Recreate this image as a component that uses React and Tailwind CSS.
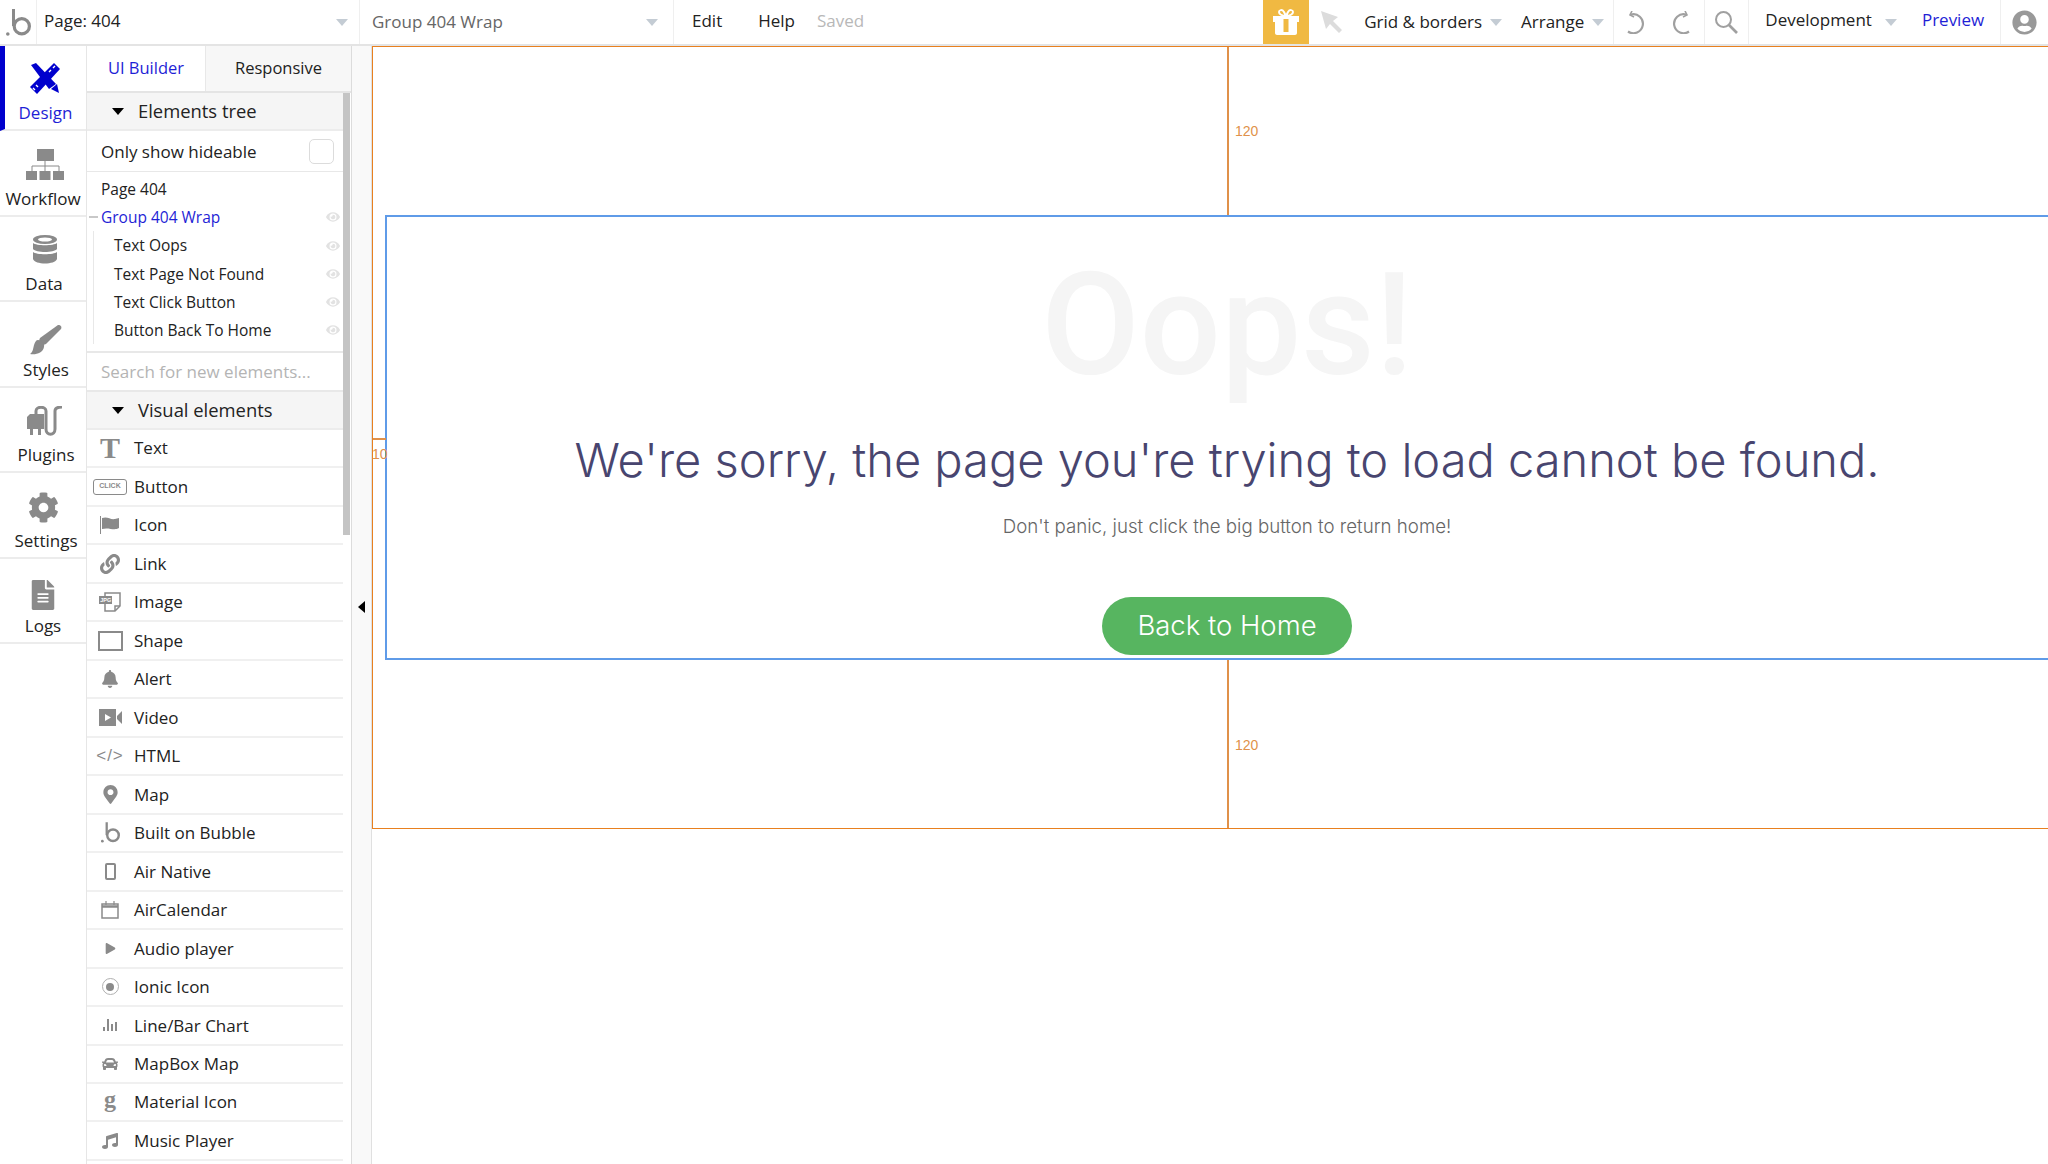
import { FaBell, FaCar, FaMapMarkerAlt, FaMusic, FaPlay, FaCog, FaFileAlt, FaUserCircle, FaEye, FaLink } from "react-icons/fa";

const gray = "#8a8a8a";

const BubbleLogo = ({ className }) => (
  <svg viewBox="0 0 25 27" className={className} fill="none">
    <circle cx="1.8" cy="25" r="1.8" fill={gray} />
    <path d="M7.5 0v17" stroke={gray} strokeWidth="3" />
    <circle cx="15.8" cy="17.2" r="7.6" stroke={gray} strokeWidth="3.2" />
  </svg>
);

const Caret = ({ className = "" }) => (
  <span className={`inline-block h-0 w-0 border-x-[6px] border-t-[7px] border-x-transparent border-t-[#c4ccd4] ${className}`} />
);

const DesignIcon = () => (
  <svg viewBox="0 0 32 31" className="h-[31px] w-[32px] -translate-x-[2px]" fill="#0000cd">
    <path d="M26 0l6 6L9 31l-7-7z" />
    <path d="M3 2l5-2 20 21-7 5z" />
    <path d="M23 26l6-5 2 9z" />
    <path d="M25 5l2-2M21 9l2-2M8 22l2 2M5 25l2 2" stroke="#fff" strokeWidth="1.4" />
  </svg>
);

const WorkflowIcon = () => (
  <svg viewBox="0 0 38 31" className="h-[31px] w-[38px]" fill={gray}>
    <rect x="11" y="0" width="17" height="12" />
    <rect x="0" y="22" width="11" height="9" />
    <rect x="13.5" y="22" width="11" height="9" />
    <rect x="27" y="22" width="11" height="9" />
    <path d="M19 12v10M6 22v-5h27v5" stroke={gray} fill="none" />
  </svg>
);

const DataIcon = () => (
  <svg viewBox="0 0 24 29" className="h-[29px] w-[24px]" fill={gray}>
    <ellipse cx="12" cy="4.5" rx="12" ry="4.5" />
    <ellipse cx="12" cy="4.5" rx="7" ry="2" fill="#fff" />
    <path d="M0 8c3 3 21 3 24 0v6c-3 4-21 4-24 0z" />
    <path d="M0 17c3 3 21 3 24 0v7c-2 6-22 6-24 0z" />
  </svg>
);

const BrushIcon = () => (
  <svg viewBox="0 0 32 30" className="h-[30px] w-[32px]" fill={gray}>
    <path d="M28 0c3 0 4 2 3 4L16 19c-2 1-4 1-6-1-1-2-1-3 0-5z" />
    <path d="M8 15c4 0 7 3 6 7-1 6-8 8-14 7 3-2 3-5 4-9 1-3 2-5 4-5z" />
  </svg>
);

const PluginsIcon = () => (
  <svg viewBox="0 0 35 30" className="h-[30px] w-[35px]" fill={gray}>
    <path d="M3 8h14v15H0V11z" />
    <path d="M3 23h3v6H3zM11 23h3v6h-3z" />
    <path d="M9 8V5c0-5 10-5 10 0v18c0 7 9 7 9 0V5c0-3 2-4 7-4" stroke={gray} strokeWidth="3" fill="none" />
  </svg>
);

const GiftIcon = () => (
  <svg viewBox="0 0 26 26" className="h-[26px] w-[26px]">
    <path d="M13 7C9 7 6 5 6 3s3-3 5 0l2 4 2-4c2-3 5-2 5 0s-3 4-7 4z" fill="none" stroke="#fff" strokeWidth="2" />
    <path d="M0 7h26v6H24v11c0 1-1 2-2 2H4c-1 0-2-1-2-2V13H0z" fill="#fff" />
    <rect x="10.5" y="10" width="5" height="13" fill="#f0b942" />
  </svg>
);

const PointerIcon = () => (
  <svg viewBox="0 0 22 22" className="h-[22px] w-[22px]" fill="#dcdcdc">
    <path d="M0 0l17 6-5 4 9 9-3 3-9-9-4 5z" />
  </svg>
);

const UndoIcon = ({ className = "" }) => (
  <svg viewBox="0 0 20 23" className={`h-[23px] w-[20px] ${className}`} fill="none" stroke="#a0a0a0" strokeWidth="2.2">
    <path d="M5 3.5a9.5 9.5 0 1 1-3 17" />
    <path d="M6 0L4 4l4 2" strokeWidth="1.6" />
  </svg>
);

const SearchIcon = () => (
  <svg viewBox="0 0 23 23" className="h-[23px] w-[23px]" fill="none" stroke="#a0a0a0">
    <circle cx="8.5" cy="8.5" r="7.5" strokeWidth="2" />
    <path d="M14 14l8 8" strokeWidth="2.6" />
  </svg>
);

const navItems = [
  { label: "Workflow", icon: <WorkflowIcon />, iconClass: "translate-x-[2px] -translate-y-[1px]", labelClass: "" },
  { label: "Data", icon: <DataIcon />, iconClass: "translate-x-[2px] -translate-y-[2px]", labelClass: "pl-[2px]" },
  { label: "Styles", icon: <BrushIcon />, iconClass: "translate-x-[3px] translate-y-[3px]", labelClass: "pl-[6px]" },
  { label: "Plugins", icon: <PluginsIcon />, iconClass: "translate-x-[1px] -translate-y-[1px]", labelClass: "pl-[6px]" },
  { label: "Settings", icon: <FaCog size={31} color={gray} />, iconClass: "", labelClass: "pl-[6px]" },
  { label: "Logs", icon: <FaFileAlt size={30} color={gray} />, iconClass: "translate-y-[2px]", labelClass: "" },
];

const treeItems = ["Text Oops", "Text Page Not Found", "Text Click Button", "Button Back To Home"];

const visualElements = [
  { label: "Text", icon: <span className="font-['Liberation_Serif'] text-[30px] font-bold leading-none text-[#8a8a8a]">T</span> },
  {
    label: "Button",
    icon: (
      <span className="flex h-[16px] w-[34px] items-center justify-center rounded-[3px] border border-[#8a8a8a] font-['Liberation_Sans'] text-[7px] font-bold text-[#8a8a8a]">
        CLICK
      </span>
    ),
  },
  {
    label: "Icon",
    icon: (
      <svg viewBox="0 0 20 18" className="h-[18px] w-[20px]" fill={gray}>
        <path d="M0 0h1v18H0z" />
        <path d="M2 2c6-2 8 2 13 1 1 0 3-1 4-1v10c-5 3-10-1-17 1z" />
      </svg>
    ),
  },
  { label: "Link", icon: <FaLink size={20} color={gray} /> },
  {
    label: "Image",
    icon: (
      <svg viewBox="0 0 22 20" className="h-[20px] w-[22px]" fill="none">
        <path d="M6 1h15v13l-5 5H6z" stroke={gray} strokeWidth="1.5" />
        <path d="M16 19v-5h5" stroke={gray} strokeWidth="1.5" />
        <rect x="0" y="4" width="13" height="8" fill={gray} />
        <text x="1.2" y="10" fontSize="5.5" fontWeight="700" fill="#fff" fontFamily="Liberation Sans">JPG</text>
      </svg>
    ),
  },
  { label: "Shape", icon: <span className="block h-[20px] w-[25px] border-2 border-[#8a8a8a]" /> },
  { label: "Alert", icon: <FaBell size={18} color={gray} /> },
  {
    label: "Video",
    icon: (
      <svg viewBox="0 0 23 17" className="h-[17px] w-[23px]" fill={gray}>
        <rect x="0" y="0" width="17" height="17" />
        <path d="M6 5l6 3.5L6 12z" fill="#fff" />
        <path d="M18 7l5-5v13l-5-5z" />
      </svg>
    ),
  },
  { label: "HTML", icon: <span className="font-['Liberation_Sans'] text-[17px] leading-none tracking-[1px] text-[#8a8a8a]">{"</>"}</span> },
  { label: "Map", icon: <FaMapMarkerAlt size={19} color={gray} /> },
  { label: "Built on Bubble", icon: <BubbleLogo className="h-[21px] w-[19px]" /> },
  { label: "Air Native", icon: <span className="block h-[17px] w-[11px] rounded-[2px] border-2 border-[#8a8a8a]" /> },
  {
    label: "AirCalendar",
    icon: (
      <svg viewBox="0 0 18 18" className="h-[18px] w-[18px]" fill="none" stroke={gray}>
        <rect x="1" y="3" width="16" height="14" strokeWidth="1.5" />
        <path d="M1 5.5h16" strokeWidth="2.5" />
        <path d="M5 0v4M13 0v4" strokeWidth="1.2" />
      </svg>
    ),
  },
  { label: "Audio player", icon: <FaPlay size={11} color={gray} /> },
  {
    label: "Ionic Icon",
    icon: (
      <span className="flex h-[17px] w-[17px] items-center justify-center rounded-full border border-[#b0b0b0]">
        <span className="block h-[8px] w-[8px] rounded-full bg-[#8a8a8a]" />
      </span>
    ),
  },
  {
    label: "Line/Bar Chart",
    icon: (
      <svg viewBox="0 0 14 12" className="h-[12px] w-[14px]" fill={gray}>
        <path d="M0 8h2v4H0zM4 0h2v12H4zM8 5h2v7H8zM12 3h2v9h-2z" />
      </svg>
    ),
  },
  { label: "MapBox Map", icon: <FaCar size={16} color={gray} /> },
  { label: "Material Icon", icon: <span className="-translate-y-[3px] font-['Liberation_Serif'] text-[24px] font-bold leading-none text-[#8a8a8a]">g</span> },
  { label: "Music Player", icon: <FaMusic size={16} color={gray} /> },
];

const Sidebar = () => (
  <div className="flex h-full w-[87px] shrink-0 flex-col border-r border-[#e6e6e6] bg-white">
    <div className="flex h-[85px] flex-col items-center border-b-2 border-l-[5px] border-[#ececec] border-l-[#0000cd] pt-[17px]">
      <DesignIcon />
      <span className="mt-[7px] text-[17px] leading-[24px] text-[#1f1fd6]">Design</span>
    </div>
    {navItems.map((item) => (
      <div key={item.label} className="flex h-[85.5px] flex-col items-center justify-end border-b-2 border-[#ececec] pb-[4px]">
        <div className={`flex h-[34px] items-center justify-center ${item.iconClass}`}>{item.icon}</div>
        <span className={`mt-[4px] text-[17px] leading-[24px] text-[#222] ${item.labelClass}`}>{item.label}</span>
      </div>
    ))}
  </div>
);

const SectionHeader = ({ title }) => (
  <div className="flex h-[38px] items-center border-b-2 border-[#ececec] bg-[#f5f5f5] pl-[25px]">
    <span className="h-0 w-0 border-x-[6px] border-t-[7px] border-x-transparent border-t-black" />
    <span className="ml-[14px] text-[18.4px] text-[#222]">{title}</span>
  </div>
);

const EyeDim = () => <FaEye size={14} color="#e2e2e2" />;

const Panel = () => (
  <div className="flex h-full w-[265px] shrink-0 flex-col border-r border-[#dcdcdc] bg-white">
    <div className="flex h-[47px] border-b-2 border-[#e4e4e4] text-[16.5px]">
      <div className="flex w-[118px] items-center justify-center text-[#1f1fd6]">UI Builder</div>
      <div className="flex flex-1 items-center justify-center border-l border-[#e8e8e8] bg-[#f7f7f7] text-[#222]">Responsive</div>
    </div>
    <div className="flex min-h-0 flex-1">
      <div className="min-w-0 flex-1 overflow-hidden">
        <SectionHeader title="Elements tree" />
        <div className="flex h-[41px] items-center justify-between border-b border-[#e8e8e8] pl-[14px] pr-[9px] pt-[1px] text-[17px] text-[#222]">
          <span>Only show hideable</span>
          <span className="h-[25px] w-[25px] rounded-[5px] border border-[#dcdcdc]" />
        </div>
        <div className="h-[181px] border-b-2 border-[#e8e8e8] pt-[3px] text-[15.5px] leading-[28.2px] text-[#222]">
          <div className="pl-[14px]">Page 404</div>
          <div className="relative flex items-center justify-between pl-[14px] pr-[3px] text-[#1f1fd6]">
            <span className="absolute left-[2px] top-[13px] h-[2px] w-[9px] bg-[#c8c8c8]" />
            Group 404 Wrap
            <EyeDim />
          </div>
          <div className="ml-[6px] border-l border-[#e8e8e8]">
            {treeItems.map((name) => (
              <div key={name} className="flex items-center justify-between pl-[20px] pr-[3px]">
                {name}
                <EyeDim />
              </div>
            ))}
          </div>
        </div>
        <div className="flex h-[39px] items-center border-b-2 border-[#e8e8e8] pl-[14px] text-[17px] text-[#b4b4b4]">
          Search for new elements...
        </div>
        <SectionHeader title="Visual elements" />
        {visualElements.map((el) => (
          <div key={el.label} className="flex h-[38.48px] items-center border-b-2 border-[#f0f0f0] text-[17px] text-[#222]">
            <span className="flex w-[46px] shrink-0 items-center justify-center">{el.icon}</span>
            <span className="ml-[1px]">{el.label}</span>
          </div>
        ))}
      </div>
      <div className="w-[8px] shrink-0 bg-white">
        <div className="h-[442px] w-[7px] bg-[#c4c4c4]" />
      </div>
    </div>
  </div>
);

const TopBar = () => (
  <div className="flex h-[46px] shrink-0 items-center border-b-2 border-[#e4e4e4] bg-white text-[17px] text-[#222]">
    <div className="flex h-full w-[37px] items-center justify-center border-r border-[#efefef]">
      <BubbleLogo className="h-[27px] w-[25px]" />
    </div>
    <div className="flex h-full w-[323px] items-center justify-between border-r border-[#efefef] pl-[7px] pr-[11px]">
      <span className="pb-[2px]">Page: 404</span>
      <Caret />
    </div>
    <div className="flex h-full w-[314px] items-center justify-between border-r border-[#efefef] pl-[12px] pr-[15px] text-[#666]">
      <span className="pb-[1px]">Group 404 Wrap</span>
      <Caret />
    </div>
    <span className="ml-[18px] pb-[3px]">Edit</span>
    <span className="ml-[36px] pb-[3px]">Help</span>
    <span className="ml-[22px] pb-[3px] text-[#b8b8b8]">Saved</span>
    <div className="ml-[399px] flex h-full w-[46px] items-center justify-center bg-[#f0b942]">
      <GiftIcon />
    </div>
    <span className="ml-[12px]"><PointerIcon /></span>
    <span className="ml-[21px] pb-[1px]">Grid &amp; borders</span>
    <Caret className="ml-[8px]" />
    <span className="ml-[19px]">Arrange</span>
    <Caret className="ml-[8px]" />
    <div className="ml-[9px] flex h-full w-[92px] items-center justify-between border-x border-[#efefef] pl-[12px] pr-[13px]">
      <UndoIcon />
      <UndoIcon className="-scale-x-100" />
    </div>
    <div className="flex h-full w-[44px] items-center justify-center border-r border-[#efefef]">
      <SearchIcon />
    </div>
    <span className="ml-[16px] pb-[5px]">Development</span>
    <Caret className="ml-[13px]" />
    <span className="ml-[25px] pb-[5px] text-[#1f1fd6]">Preview</span>
    <div className="ml-[16px] flex h-full flex-1 items-center justify-center border-l border-[#efefef]">
      <FaUserCircle size={25} color="#999" />
    </div>
  </div>
);

const GuideLine = ({ className, labelClass }) => (
  <div className={`relative ml-[854px] w-[2px] bg-[#e0914a] ${className}`}>
    <span className={`absolute left-[8px] font-['Liberation_Sans'] text-[14px] leading-none text-[#e0914a] ${labelClass}`}>120</span>
  </div>
);

const Canvas = () => (
  <div className="relative h-full min-w-0 flex-1 overflow-hidden bg-white">
    <div className="relative h-[783px] w-[1710px] border border-[#e8801f]">
      <GuideLine className="h-[168px]" labelClass="top-[77px]" />
      <div className="absolute left-0 top-[391px] h-[2px] w-[13px] bg-[#e0914a]" />
      <span className="absolute -left-[1px] top-[397px] font-['Liberation_Sans'] text-[14px] text-[#e0914a]">10</span>
      <div className="ml-[12px] flex h-[445px] w-[1684px] flex-col items-center border-2 border-[#5f9be8] bg-white">
        <div className="mt-[28px] font-['Roboto'] text-[143px] font-medium leading-[160px] text-[#f5f5f5]">Oops!</div>
        <div className="mt-[27px] font-['Inter'] text-[47px] font-light leading-[56px] text-[#48456f]">We're sorry, the page you're trying to load cannot be found.</div>
        <div className="mt-[27px] font-['Inter'] text-[18.7px] font-light leading-[24px] text-[#666]">Don't panic, just click the big button to return home!</div>
        <button className="mt-[58px] h-[58px] w-[250px] rounded-[29px] bg-[#57b560] font-['Inter'] text-[27.5px] font-light text-white">Back to Home</button>
      </div>
      <GuideLine className="h-[168px]" labelClass="top-[78px]" />
    </div>
  </div>
);

export default function App() {
  return (
    <div className="flex h-[1164px] w-[2048px] flex-col overflow-hidden bg-white font-['Open_Sans','Noto_Sans',sans-serif]">
      <TopBar />
      <div className="flex min-h-0 flex-1">
        <Sidebar />
        <Panel />
        <div className="relative flex h-full w-[20px] shrink-0 items-center border-r border-[#e0e0e0] bg-[#f9f9f9]">
          <span className="absolute left-[6px] top-[555px] h-0 w-0 border-y-[6px] border-r-[7px] border-y-transparent border-r-black" />
        </div>
        <Canvas />
      </div>
    </div>
  );
}
